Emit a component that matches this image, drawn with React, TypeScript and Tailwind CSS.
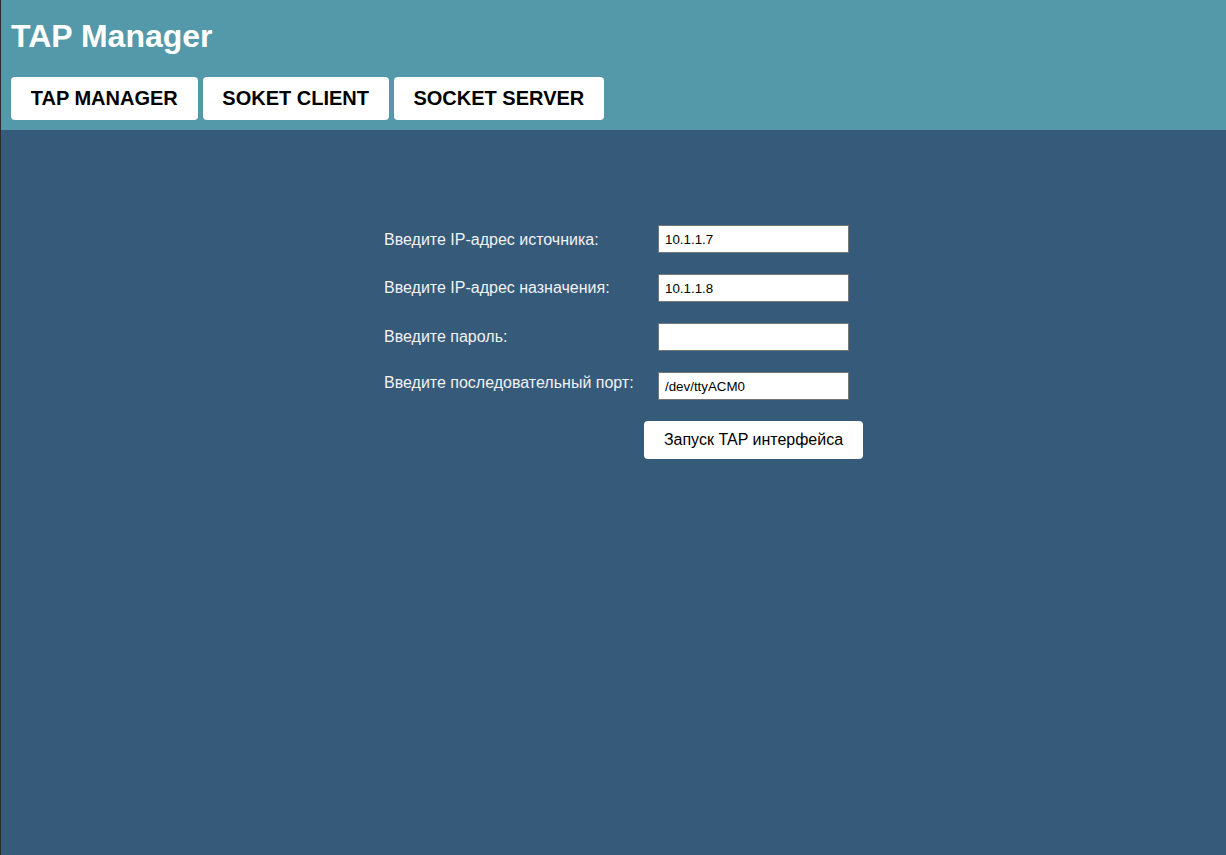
const navItems = ["TAP MANAGER", "SOKET CLIENT", "SOCKET SERVER"];

const fields = [
  { label: "Введите IP-адрес источника:", value: "10.1.1.7", offset: "mt-[6px]" },
  { label: "Введите IP-адрес назначения:", value: "10.1.1.8", offset: "mt-[5px]" },
  { label: "Введите пароль:", value: "", offset: "mt-[5px]" },
  { label: "Введите последовательный порт:", value: "/dev/ttyACM0", offset: "mt-[2px]" },
];

export default function App() {
  return (
    <div className="flex min-h-[855px] flex-col border-l border-[#2b2b2b] bg-[#365a7a] font-['Liberation_Sans',Arial,sans-serif]">
      <header className="bg-[#5499a9] px-[10px] pt-[18px] pb-[10px]">
        <h1 className="text-[32px] leading-[37px] font-bold text-white">TAP Manager</h1>
        <nav className="mt-[22px] flex gap-[5px]">
          {navItems.map((item) => (
            <button
              key={item}
              className="h-[43px] rounded-[4px] bg-white px-[19.75px] pb-[2px] text-[20px] font-bold text-black"
            >
              {item}
            </button>
          ))}
        </nav>
      </header>

      <main className="flex flex-1 justify-center pt-[95px]">
        <div className="w-[459px] shrink-0">
          <div className="flex flex-col gap-[21px]">
            {fields.map((f) => (
              <div key={f.label} className="flex items-start">
                <label className={`w-[274px] shrink-0 text-[16px] leading-[18px] text-[#f2f2f2] ${f.offset}`}>
                  {f.label}
                </label>
                <input
                  type="text"
                  defaultValue={f.value}
                  className="h-[28px] w-[191px] shrink-0 border border-[#767676] bg-white px-[6px] text-[13.33px] text-black outline-none"
                />
              </div>
            ))}
          </div>
          <div className="mt-[21px] pl-[260px]">
            <button className="h-[38px] w-[219px] rounded-[4px] bg-white text-[16px] whitespace-nowrap text-black">
              Запуск TAP интерфейса
            </button>
          </div>
        </div>
      </main>
    </div>
  );
}
